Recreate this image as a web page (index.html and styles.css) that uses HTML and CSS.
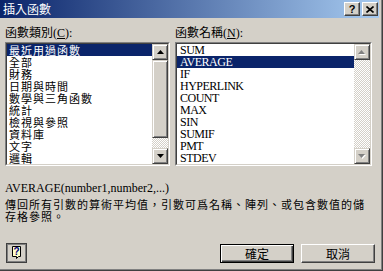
FILE: index.html
```html
<!DOCTYPE html>
<html lang="zh-Hant">

<head>
    <meta charset="UTF-8">
    <title>插入函數</title>
    <link rel="stylesheet" href="styles.css">
</head>

<body>
    <div class="window">
        <div class="titlebar">
            <span class="title">插入函數</span>
            <div class="caption-btns">
                <span class="cap-btn cap-help">?</span>
                <span class="cap-btn">
                    <svg width="8" height="7" viewBox="0 0 8 7"><path d="M0.5 0.5L7.5 6.5M7.5 0.5L0.5 6.5" stroke="#000" stroke-width="1.6" fill="none"/></svg>
                </span>
            </div>
        </div>

        <div class="content">
            <div class="lists">
                <div class="group group-cat">
                    <div class="label">函數類別(<u>C</u>):</div>
                    <div class="listbox">
                        <div class="listbox-inner">
                            <ul class="items items-cat">
                                <li class="selected">最近用過函數</li>
                                <li>全部</li>
                                <li>財務</li>
                                <li>日期與時間</li>
                                <li>數學與三角函數</li>
                                <li>統計</li>
                                <li>檢視與參照</li>
                                <li>資料庫</li>
                                <li>文字</li>
                                <li>邏輯</li>
                            </ul>
                            <div class="scrollbar">
                                <div class="sb-btn"><svg width="7" height="4" viewBox="0 0 7 4"><path d="M3.5 0L7 4H0z" fill="#000"/></svg></div>
                                <div class="sb-track">
                                    <div class="sb-thumb"></div>
                                </div>
                                <div class="sb-btn"><svg width="7" height="4" viewBox="0 0 7 4"><path d="M0 0H7L3.5 4z" fill="#000"/></svg></div>
                            </div>
                        </div>
                    </div>
                </div>

                <div class="group group-fn">
                    <div class="label">函數名稱(<u>N</u>):</div>
                    <div class="listbox">
                        <div class="listbox-inner">
                            <ul class="items items-fn">
                                <li>SUM</li>
                                <li class="selected">AVERAGE</li>
                                <li>IF</li>
                                <li>HYPERLINK</li>
                                <li>COUNT</li>
                                <li>MAX</li>
                                <li>SIN</li>
                                <li>SUMIF</li>
                                <li>PMT</li>
                                <li>STDEV</li>
                            </ul>
                            <div class="scrollbar">
                                <div class="sb-btn"><svg width="8" height="5" viewBox="0 0 8 5"><path d="M4.5 1L8 5H1z" fill="#fff"/><path d="M3.5 0L7 4H0z" fill="#808080"/></svg></div>
                                <div class="sb-track"></div>
                                <div class="sb-btn"><svg width="8" height="5" viewBox="0 0 8 5"><path d="M1 1H8L4.5 5z" fill="#fff"/><path d="M0 0H7L3.5 4z" fill="#808080"/></svg></div>
                            </div>
                        </div>
                    </div>
                </div>
            </div>

            <div class="syntax">AVERAGE(number1,number2,...)</div>
            <div class="desc">傳回所有引數的算術平均值，引數可爲名稱、陣列、或包含數值的儲存格參照。</div>

            <div class="footer">
                <span class="help-btn">
                    <svg width="21" height="20" viewBox="0 0 21 20">
                        <rect x="0.5" y="0.5" width="20" height="19" fill="#d4d0c8" stroke="#404040"/>
                        <rect x="1.5" y="1.5" width="18" height="17" fill="none" stroke="#808080"/>
                        <path d="M6.5 3.5H14.5V13.5H12.5L10.5 15.5V13.5H6.5Z" fill="#ffffc8" stroke="#000"/>
                        <text x="10.6" y="12" font-family="Liberation Sans" font-size="10" font-weight="bold" text-anchor="middle" fill="#000080">?</text>
                    </svg>
                </span>
                <span class="spacer"></span>
                <span class="btn btn-default">確定</span>
                <span class="btn">取消</span>
            </div>
        </div>
    </div>
</body>

</html>
```

FILE: styles.css
```css
body {
    margin: 0;
    background-color: #d4d0c8;
    font-family: "Liberation Serif", "Noto Sans CJK TC", serif;
    font-size: 12px;
    color: #000;
}

.window {
    width: 383px;
    height: 271px;
    box-sizing: border-box;
    padding-right: 3px;
    border-right: 1px solid #404040;
    border-bottom: 1px solid #404040;
    box-shadow: inset -1px -1px 0 #808080;
    display: flex;
    flex-direction: column;
}

.titlebar {
    height: 18px;
    display: flex;
    align-items: center;
    justify-content: space-between;
    padding: 0 1px 0 3px;
    background: linear-gradient(to right, #0a246a, #a6caf0);
    color: #fff;
}

.title {
    font-family: "Noto Sans CJK TC", sans-serif;
    font-size: 12px;
    line-height: 18px;
}

.caption-btns {
    display: flex;
    gap: 2px;
}

.cap-btn {
    width: 16px;
    height: 14px;
    box-sizing: border-box;
    display: flex;
    align-items: center;
    justify-content: center;
    background-color: #d4d0c8;
    border: 1px solid;
    border-color: #fff #404040 #404040 #fff;
    box-shadow: inset -1px -1px 0 #808080;
}

.cap-help {
    font-family: "Liberation Sans", sans-serif;
    font-weight: bold;
    font-size: 11px;
    line-height: 12px;
    color: #000;
}

.content {
    flex: 1;
    display: flex;
    flex-direction: column;
    padding: 9px 4px 0 5px;
}

.lists {
    display: flex;
    gap: 5px;
    margin-right: 3px;
}

.group-cat {
    width: 165px;
}

.group-fn {
    flex: 1;
}

.label {
    line-height: 12px;
    height: 12px;
    margin-bottom: 3px;
    white-space: nowrap;
}

.listbox {
    height: 124px;
    box-sizing: border-box;
    border: 1px solid;
    border-color: #808080 #fff #fff #808080;
}

.listbox-inner {
    height: 100%;
    box-sizing: border-box;
    border: 1px solid;
    border-color: #404040 #d4d0c8 #d4d0c8 #404040;
    background-color: #fff;
    display: flex;
}

.items {
    flex: 1;
    list-style: none;
    margin: 0;
    padding: 0;
}

.items li {
    height: 12px;
    line-height: 12px;
    padding-left: 2px;
    white-space: nowrap;
}

.items-cat li {
    font-family: "Noto Sans CJK TC", sans-serif;
    font-size: 11px;
    letter-spacing: 1px;
}

.items-fn li {
    padding-left: 3px;
    letter-spacing: -0.5px;
}

.items li.selected {
    background-color: #0a246a;
    color: #fff;
}

.scrollbar {
    width: 16px;
    display: flex;
    flex-direction: column;
}

.sb-btn {
    height: 16px;
    box-sizing: border-box;
    display: flex;
    align-items: center;
    justify-content: center;
    background-color: #d4d0c8;
    border: 1px solid;
    border-color: #d4d0c8 #404040 #404040 #d4d0c8;
    box-shadow: inset 1px 1px 0 #fff, inset -1px -1px 0 #808080;
}

.sb-track {
    flex: 1;
    background: repeating-conic-gradient(#d4d0c8 0 25%, #fff 0 50%) 0 0 / 2px 2px;
}

.sb-thumb {
    height: 78px;
    box-sizing: border-box;
    background-color: #d4d0c8;
    border: 1px solid;
    border-color: #d4d0c8 #404040 #404040 #d4d0c8;
    box-shadow: inset 1px 1px 0 #fff, inset -1px -1px 0 #808080;
}

.syntax {
    margin-top: 16px;
    line-height: 13px;
    white-space: nowrap;
}

.desc {
    margin-top: 3px;
    line-height: 12px;
    font-family: "Noto Sans CJK TC", sans-serif;
    font-size: 11px;
    letter-spacing: 1px;
}

.footer {
    margin-top: 21px;
    display: flex;
    align-items: center;
}

.help-btn {
    display: flex;
    margin-left: 1px;
}

.spacer {
    flex: 1;
}

.btn {
    width: 74px;
    height: 19px;
    box-sizing: border-box;
    margin-left: 7px;
    display: flex;
    align-items: center;
    justify-content: center;
    font-family: "Noto Sans CJK TC", sans-serif;
    font-size: 12px;
    background-color: #d4d0c8;
    border: 1px solid;
    border-color: #fff #404040 #404040 #fff;
    box-shadow: inset -1px -1px 0 #808080;
}

.btn-default {
    border-color: #000;
    box-shadow: inset 1px 1px 0 #fff, inset -1px -1px 0 #404040, inset -2px -2px 0 #808080;
}
```
